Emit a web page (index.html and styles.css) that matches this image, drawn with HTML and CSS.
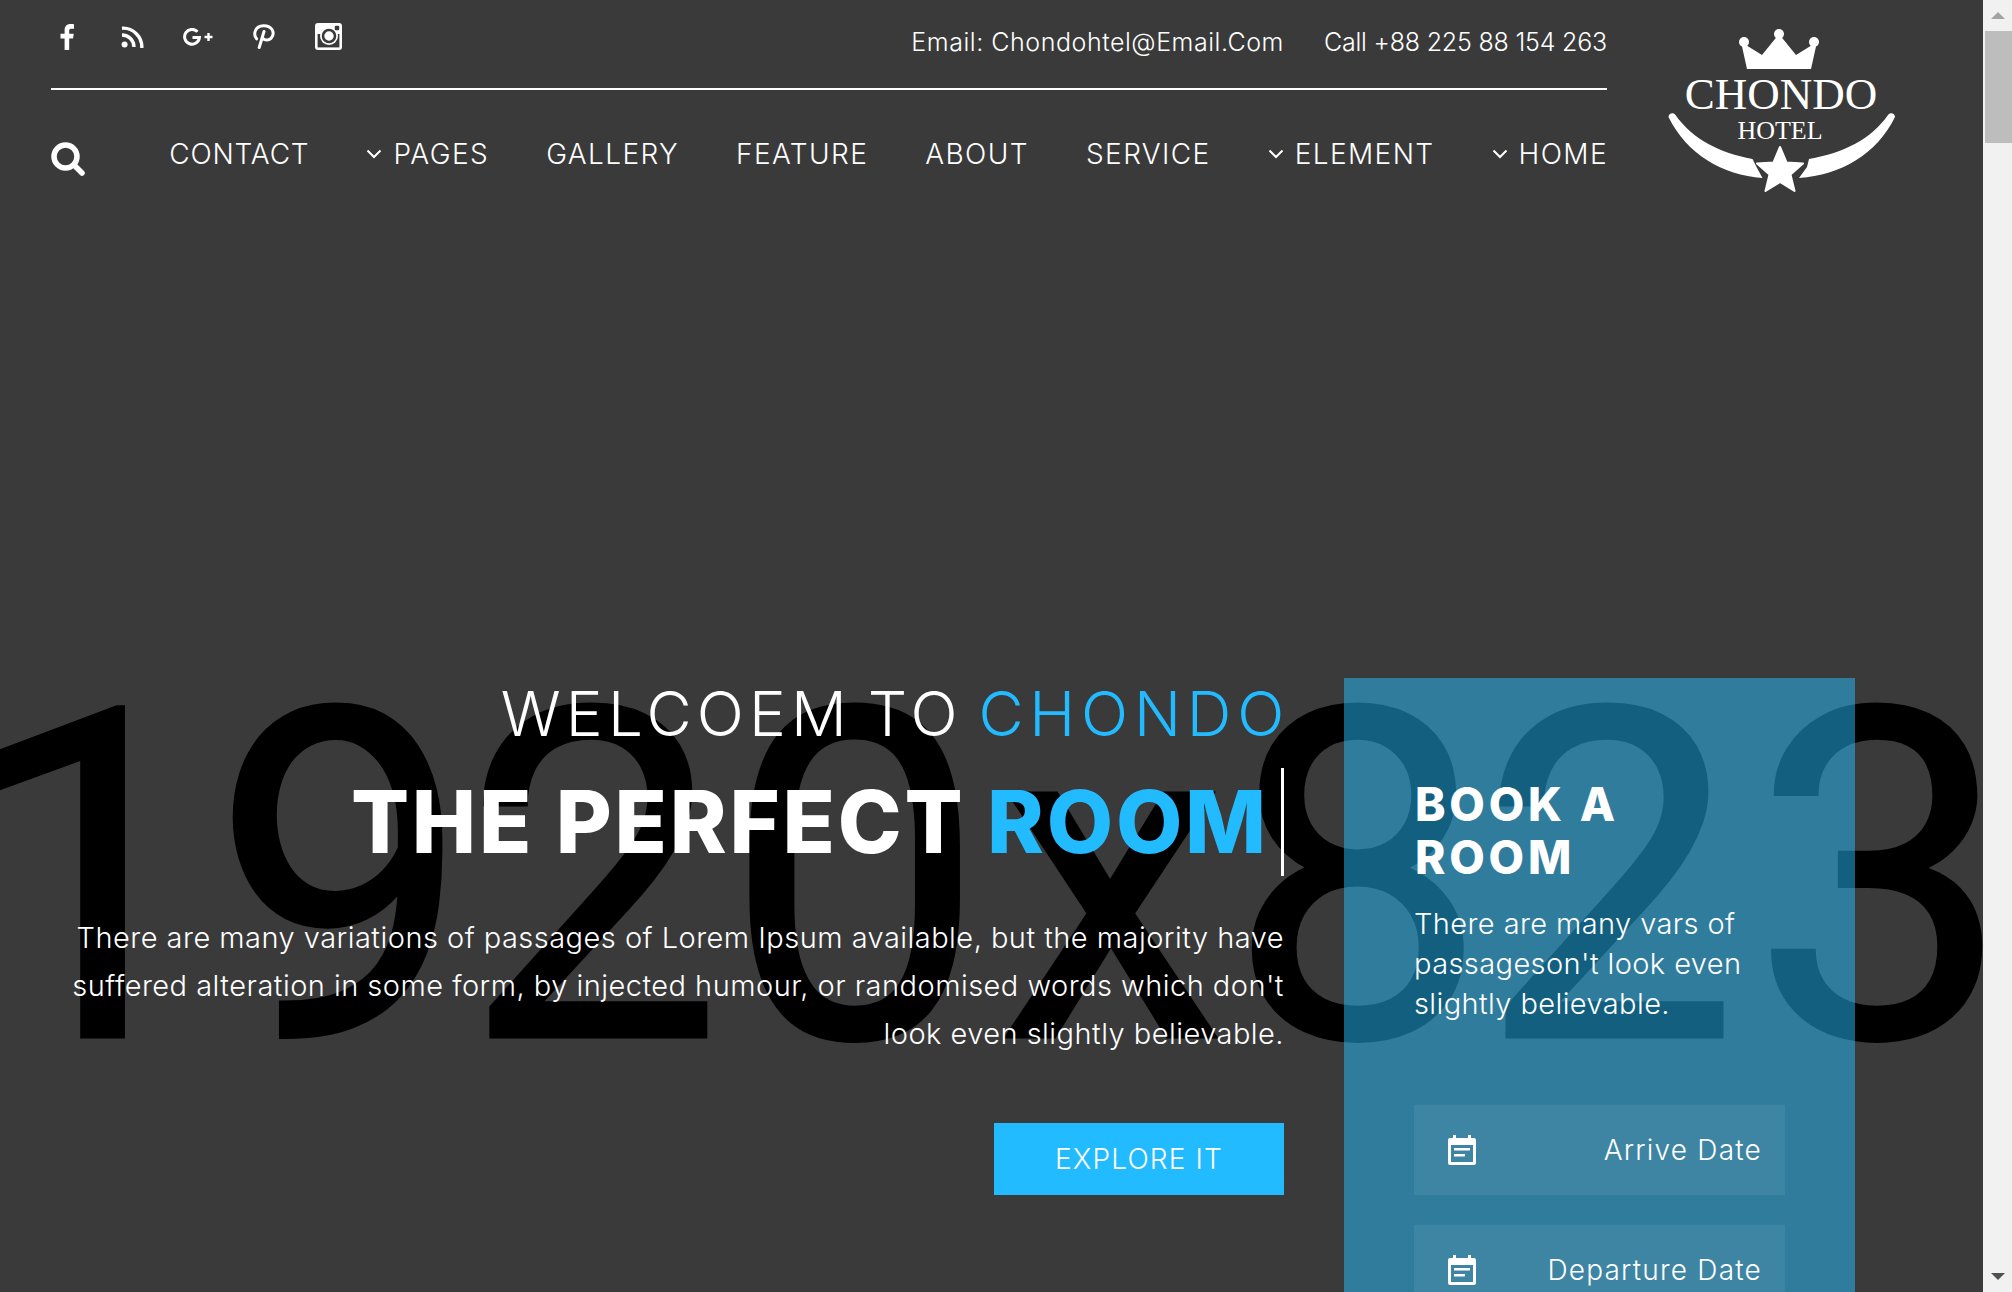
FILE: index.html
```html
<!DOCTYPE html>
<html lang="en">
<head>
    <meta charset="UTF-8">
    <meta name="viewport" content="width=device-width, initial-scale=1.0">
    <title>Chondo Hotel</title>
    <link rel="stylesheet" href="styles.css">
</head>
<body>

<div class="page">
    <!-- Placeholder hero picture -->
    <div class="hero-image"><span class="hero-image-one">1</span>9<span class="hero-image-nudge">20</span>x8<span class="hero-image-nudge">2</span>3</div>

    <header class="site-header">
        <div class="header-main">
            <div class="top-bar">
                <div class="social">
                    <a class="social-icon"><svg width="16" height="27" viewBox="0 0 16 27"><path fill="#fff" d="M10.2 27V15.4h3.9l.6-4.6h-4.5V7.9c0-1.3.4-2.2 2.2-2.2H15V1.3C14.5 1.2 13.100 1 11.500 1 8 1 5.600 3.100 5.600 7v3.800H1.500v4.600h4.100V27z"/></svg></a>
                    <a class="social-icon"><svg width="23" height="22" viewBox="0 0 23 22"><circle cx="3.600" cy="18.400" r="3" fill="#fff"/><path fill="none" stroke="#fff" stroke-width="3.400" d="M1 9a12 12 0 0 1 12 12M1 2.200a18.800 18.800 0 0 1 19.800 19.800"/></svg></a>
                    <a class="social-icon"><svg width="30" height="18" viewBox="0 0 30 18"><path fill="none" stroke="#fff" stroke-width="3" d="M14.500 3.800A7.400 7.400 0 1 0 16.400 9.500H9.500"/><path fill="none" stroke="#fff" stroke-width="2.400" d="M21.500 9h8M25.500 5v8"/></svg></a>
                    <a class="social-icon"><svg width="23" height="25" viewBox="0 0 23 25"><path fill="none" stroke="#fff" stroke-width="3" stroke-linecap="round" d="M4.600 14.800C1.500 11.500 1.800 2 11.500 1.700 20 1.500 22.300 8 20.500 12c-1.700 4.400-7 5.200-9.800 2.300M12 7.500 7.200 23.500"/></svg></a>
                    <a class="social-icon"><svg width="27" height="27" viewBox="0 0 27 27"><rect width="27" height="27" rx="3" fill="#fff"/><rect x="2.600" y="11" width="21.800" height="13.400" fill="#3a3a3a"/><circle cx="14" cy="13" r="9" fill="#fff"/><circle cx="14" cy="13" r="6" fill="none" stroke="#3a3a3a" stroke-width="2.600"/><rect x="19.800" y="2.800" width="4.400" height="4.400" rx="1" fill="#3a3a3a"/></svg></a>
                </div>
                <div class="contact-info">
                    <span class="contact-email">Email: Chondohtel@Email.Com</span>
                    <span class="contact-call">Call +88 225 88 154 263</span>
                </div>
            </div>
            <nav class="main-nav">
                <a class="search-btn"><svg width="34" height="34" viewBox="0 0 34 34"><circle cx="14.500" cy="14.500" r="11.500" fill="none" stroke="#fff" stroke-width="5.500"/><path stroke="#fff" stroke-width="5.500" stroke-linecap="round" d="M23 23l8 8"/></svg></a>
                <ul class="nav-links">
                    <li class="nav-contact">CONTACT</li>
                    <li><svg class="chevron" width="16" height="10" viewBox="0 0 16 10"><path fill="none" stroke="#fff" stroke-width="2" d="M1.500 1.500 8 8l6.500-6.500"/></svg>PAGES</li>
                    <li>GALLERY</li>
                    <li>FEATURE</li>
                    <li>ABOUT</li>
                    <li>SERVICE</li>
                    <li><svg class="chevron" width="16" height="10" viewBox="0 0 16 10"><path fill="none" stroke="#fff" stroke-width="2" d="M1.500 1.500 8 8l6.500-6.500"/></svg>ELEMENT</li>
                    <li><svg class="chevron" width="16" height="10" viewBox="0 0 16 10"><path fill="none" stroke="#fff" stroke-width="2" d="M1.500 1.500 8 8l6.500-6.500"/></svg>HOME</li>
                </ul>
            </nav>
        </div>
        <svg class="logo" width="260" height="190" viewBox="0 0 260 190">
            <g fill="#fff">
                <path d="M97 59h64l6-27-21 13-17-21-17 21-21-13z"/>
                <circle cx="94" cy="32" r="5"/>
                <circle cx="129" cy="24" r="5"/>
                <circle cx="164" cy="32" r="5"/>
                <path d="M18.500 107c0-4 5-5 7-2 17 24 44 38 77 44l4 8 6 11c-40-3-76-24-94-61z"/>
                <path d="M245 107c0-4-5-5-7-2-17 24-44 38-79 44l-2 8-8 11c42-3 78-24 96-61z"/>
                <path stroke="#fff" stroke-width="2" stroke-linejoin="round" d="M130 137l6.500 15.500 16.500 1-12.500 11 4 16.500-14.500-9-14.500 9 4-16.500-12.500-11 16.500-1z"/>
                <text class="logo-name" x="131" y="99" text-anchor="middle">CHONDO</text>
                <text class="logo-sub" x="130" y="129" text-anchor="middle">HOTEL</text>
            </g>
        </svg>
    </header>

    <section class="hero">
        <div class="hero-text">
            <h2 class="welcome">WELCOEM TO <span class="accent">CHONDO</span></h2>
            <h1 class="headline">THE PERFECT <span class="accent">ROOM</span><span class="caret"></span></h1>
            <p class="intro">There are many variations of passages of Lorem Ipsum available, but the majority have<br>suffered alteration in some form, by injected humour, or randomised words which don't<br>look even slightly believable.</p>
            <a class="explore-btn">EXPLORE IT</a>
        </div>
        <aside class="booking">
            <h3>BOOK A<br>ROOM</h3>
            <p>There are many vars of<br>passageson't look even<br>slightly believable.</p>
            <div class="date-field">
                <svg width="28" height="30" viewBox="0 0 28 30"><path fill="#fff" fill-rule="evenodd" d="M5 0h3v3h12V0h3v3h3a2 2 0 0 1 2 2v23a2 2 0 0 1-2 2H2a2 2 0 0 1-2-2V5a2 2 0 0 1 2-2h3zM3 10v17h22V10zM6 13h16v2.500H6zM6 19h11v2.500H6z"/></svg>
                <span>Arrive Date</span>
            </div>
            <div class="date-field">
                <svg width="28" height="30" viewBox="0 0 28 30"><path fill="#fff" fill-rule="evenodd" d="M5 0h3v3h12V0h3v3h3a2 2 0 0 1 2 2v23a2 2 0 0 1-2 2H2a2 2 0 0 1-2-2V5a2 2 0 0 1 2-2h3zM3 10v17h22V10zM6 13h16v2.500H6zM6 19h11v2.500H6z"/></svg>
                <span>Departure Date</span>
            </div>
        </aside>
    </section>
</div>

<!-- Window scrollbar as it shows in the screenshot -->
<div class="scrollbar">
    <div class="arrow-up"></div>
    <div class="thumb"></div>
    <div class="arrow-down"></div>
</div>

</body>
</html>
```

FILE: styles.css
```css
/* Page frame */
html, body {
    margin: 0;
    height: 1292px;
    overflow: hidden;
}

body {
    display: flex;
    background-color: #3a3a3a;
    color: #fff;
    font-family: "Inter", "Noto Sans", sans-serif;
    font-weight: 300;
}

.page {
    position: relative;
    flex: 1;
    height: 1292px;
    overflow: hidden;
}

.hero-image {
    position: absolute;
    top: 601px;
    left: -50px;
    font-family: "Roboto", sans-serif;
    font-weight: 400;
    font-size: 462px;
    line-height: 556px;
    letter-spacing: 2px;
    color: #000;
    -webkit-text-stroke: 3px #000;
    white-space: nowrap;
}

.hero-image-one {
    margin-left: 9px;
    margin-right: -9px;
}

.hero-image-nudge {
    position: relative;
    left: -10px;
}

/* Header */
.site-header {
    position: relative;
    display: flex;
    padding-left: 51px;
}

.header-main {
    width: 1556px;
}

.top-bar {
    display: flex;
    justify-content: space-between;
    height: 88px;
    border-bottom: 2px solid #fff;
}

.social {
    display: flex;
    align-items: center;
    height: 27px;
    margin-left: -17px;
    padding-top: 23px;
}

.social-icon {
    display: flex;
    justify-content: center;
    width: 65.5px;
}

.contact-info {
    display: flex;
    gap: 40px;
    padding-top: 26px;
    font-size: 25px;
    line-height: 32px;
}

.contact-email {
    letter-spacing: 0.54px;
}

.contact-call {
    letter-spacing: -0.2px;
}

.main-nav {
    display: flex;
    justify-content: space-between;
    align-items: flex-start;
    padding-top: 52px;
}

.search-btn {
    display: block;
    height: 34px;
}

.nav-links {
    display: flex;
    gap: 57px;
    margin: -5px -1px 0 0;
    padding: 0;
    list-style: none;
    font-size: 28px;
    line-height: 34px;
    letter-spacing: 1.4px;
}

.nav-links li {
    display: flex;
    align-items: center;
}

.nav-links .nav-contact {
    letter-spacing: 0.8px;
}

.chevron {
    margin-right: 11px;
}

.logo {
    margin: 10px 0 0 43px;
}

.logo-name {
    font-family: "Liberation Serif", serif;
    font-size: 45px;
    font-weight: 400;
}

.logo-sub {
    font-family: "Liberation Serif", serif;
    font-size: 26px;
    font-weight: 400;
}

/* Hero */
.hero {
    position: relative;
    display: flex;
    justify-content: flex-end;
    gap: 60px;
    margin-top: 478px;
    padding-right: 128px;
}

.hero-text {
    display: flex;
    flex-direction: column;
    align-items: flex-end;
    text-align: right;
}

.accent {
    color: #22bbff;
}

.welcome {
    margin: -2px -6px 0 0;
    font-size: 62px;
    font-weight: 300;
    line-height: 76px;
    letter-spacing: 5.2px;
    word-spacing: -7px;
}

.welcome .accent {
    letter-spacing: 5.8px;
}

.headline {
    display: flex;
    align-items: center;
    margin: 16px 0 0;
    font-size: 86px;
    font-weight: 800;
    line-height: 108px;
    letter-spacing: 2.75px;
    white-space: pre;
}

.caret {
    width: 3px;
    height: 108px;
    margin-left: 12px;
    background-color: #fff;
}

.intro {
    margin: 38px 0 0;
    font-size: 29px;
    line-height: 48px;
    letter-spacing: 0.47px;
}

.explore-btn {
    display: block;
    width: 290px;
    margin-top: 65px;
    background-color: #22bbff;
    font-size: 28px;
    line-height: 72px;
    letter-spacing: 1.15px;
    text-align: center;
}

/* Booking card */
.booking {
    width: 371px;
    height: 700px;
    padding: 100px 70px 0;
    background-color: rgba(36, 190, 255, 0.5);
}

.booking h3 {
    margin: 0 0 0 1px;
    font-size: 46px;
    font-weight: 800;
    line-height: 53px;
    letter-spacing: 3.8px;
}

.booking p {
    margin: 20px 0 0;
    font-size: 29px;
    line-height: 40px;
    letter-spacing: 0.4px;
}

.booking p + .date-field {
    margin-top: 81px;
}

.date-field {
    display: flex;
    justify-content: space-between;
    align-items: center;
    height: 90px;
    margin-top: 30px;
    padding: 0 23px 0 34px;
    background-color: rgba(255, 255, 255, 0.07);
    font-size: 28px;
    letter-spacing: 1.2px;
}

/* Scrollbar */
.scrollbar {
    position: relative;
    width: 29px;
    height: 1292px;
    background-color: #f1f1f1;
}

.thumb {
    position: absolute;
    top: 31px;
    left: 2px;
    width: 27px;
    height: 112px;
    background-color: #bdbdbd;
}

.arrow-up, .arrow-down {
    position: absolute;
    left: 8px;
    width: 0;
    height: 0;
    border-left: 7px solid transparent;
    border-right: 7px solid transparent;
}

.arrow-up {
    top: 12px;
    border-bottom: 7px solid #a3a3a3;
}

.arrow-down {
    top: 1273px;
    border-top: 7px solid #505050;
}
```
